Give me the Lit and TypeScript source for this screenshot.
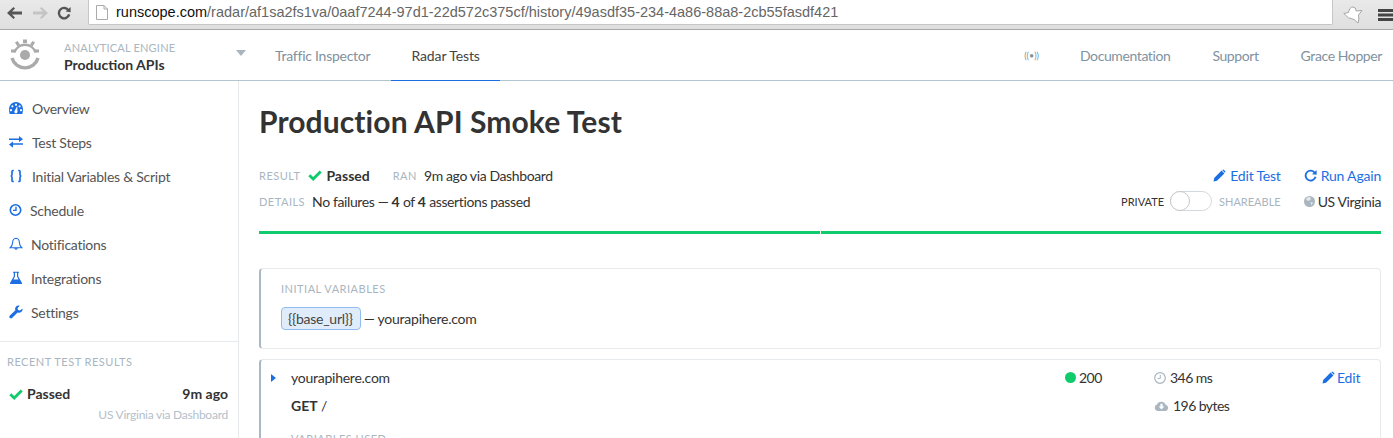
import { LitElement, html, css, svg } from "lit";
import { customElement } from "lit/decorators.js";

const BLUE = "#1c6fe3";
const pencil = html`<svg width="13" height="13" viewBox="0 0 13 13"><path fill="${BLUE}" d="M0.5 12.5 L1.2 9 L8.6 1.6 L11.4 4.4 L4 11.8 Z M9.4 0.9 Q10.2 0.1 11 0.9 L12.1 2 Q12.9 2.8 12.1 3.6 L11.9 3.8 L9.2 1.1 Z"/></svg>`;
const check = () => html`<svg width="14" height="14" viewBox="0 0 14 14"><path fill="none" stroke="#10cb6c" stroke-width="2.8" d="M1.3 7.2 L5.2 11 L12.7 3.4"/></svg>`;

const sideIcons: Record<string, unknown> = {
  overview: svg`<path fill="${BLUE}" fill-rule="evenodd" d="M.7 13 Q0 10.5 0 8 A7 7 0 0 1 14 8 Q14 10.5 13.3 13 Z M7 2.6 a1.1 1.1 0 1 0 .01 0 Z M3.4 4.2 a1.1 1.1 0 1 0 .01 0 Z M10.6 4.2 a1.1 1.1 0 1 0 .01 0 Z M2 8 a1.1 1.1 0 1 0 .01 0 Z M12 8 a1.1 1.1 0 1 0 .01 0 Z M8.2 5 L5.9 9.6 a1.6 1.6 0 1 0 2.6 1 Z"/>`,
  steps: svg`<path fill="${BLUE}" d="M0 3.4 H10 V1 L14 4.2 L10 7 V5 H0 Z M14 8.2 H4 V6.6 L0 9.6 L4 12.8 V9.8 H14 Z"/>`,
  vars: svg`<path fill="none" stroke="${BLUE}" stroke-width="1.7" d="M4.8 1.5 H4 Q3 1.5 3 2.5 V5.5 Q3 7 1.6 7 Q3 7 3 8.5 V11.5 Q3 12.5 4 12.5 H4.8 M9.2 1.5 H10 Q11 1.5 11 2.5 V5.5 Q11 7 12.4 7 Q11 7 11 8.5 V11.5 Q11 12.5 10 12.5 H9.2"/>`,
  schedule: svg`<circle cx="6.5" cy="7" r="5.2" fill="none" stroke="${BLUE}" stroke-width="1.6"/><path fill="none" stroke="${BLUE}" stroke-width="1.4" d="M7 3.8 V7.4 H4"/>`,
  bell: svg`<path fill="none" stroke="${BLUE}" stroke-width="1.1" d="M7 1.2 Q10.3 1.6 10.4 5.5 Q10.5 9 12.8 10.8 H1.2 Q3.5 9 3.6 5.5 Q3.7 1.6 7 1.2 Z M5.6 11 Q7 13.6 8.4 11"/>`,
  flask: svg`<path fill="${BLUE}" d="M4 .8 H10 V1.8 H9.2 V5.2 L13 12 Q13.4 13 12.3 13 H1.7 Q.6 13 1 12 L4.8 5.2 V1.8 H4 Z M6 1.8 V5.6 L4.4 8.4 H9.6 L8 5.6 V1.8 Z"/>`,
  wrench: svg`<path fill="${BLUE}" d="M13.5 3.4 L11 5.4 L9 4.9 L8.6 3 L10.8 .7 Q8.2 0 6.7 1.9 Q5.7 3.4 6.4 5.3 L.9 10.6 Q-.3 12 .9 13 Q2.2 14 3.3 12.8 L8.6 7.4 Q10.5 8.1 12.2 7 Q14 5.6 13.5 3.4 Z"/>`,
};

@customElement("app-root")
export class AppRoot extends LitElement {
  static styles = css`
    :host { display: block; height: 438px; overflow: hidden; background: #fff; font-family: "Lato", "Noto Sans", sans-serif; font-size: 14px; letter-spacing: -0.25px; color: #333; }
    svg { display: block; flex: none; }
    b { letter-spacing: 0; }
    .chrome { height: 30px; display: flex; align-items: flex-start; background: linear-gradient(#e9e9e9, #dfdfdf); border-bottom: 1px solid #a8a8a8; box-sizing: border-box; letter-spacing: 0; }
    .chrome .btns { width: 88px; height: 25px; display: flex; align-items: center; padding-left: 7px; gap: 9px; box-sizing: border-box; flex: none; }
    .url { width: 1245px; flex: none; height: 25px; background: #fff; border: 1px solid #c6c6c6; border-top: 0; border-radius: 0 0 2px 2px; display: flex; align-items: center; gap: 8px; padding-left: 7px; font: 14.5px "Liberation Sans", sans-serif; color: #666; box-sizing: border-box; }
    .url b { font-weight: 400; color: #111; }
    .ext { flex: 1; display: flex; align-items: center; padding: 4px 0 0 10px; height: 25px; box-sizing: border-box; }
    .ext svg + svg { margin-left: 15px; }

    .nav { height: 51px; display: flex; align-items: stretch; border-bottom: 1px solid #b4c5d2; box-sizing: border-box; }
    .brand { width: 252px; flex: none; display: flex; align-items: center; padding-left: 10px; box-sizing: border-box; }
    .brand-text { margin-left: 24px; flex: 1; padding-top: 3px; }
    .brand-text small { display: block; font-size: 11px; line-height: 16px; letter-spacing: 0.2px; color: #a9b6c0; }
    .brand-text strong { display: block; font-size: 14px; line-height: 17px; letter-spacing: 0; color: #333; }
    .caret { width: 0; height: 0; border: 5px solid transparent; border-top: 6px solid #a9b6c0; border-bottom: 0; margin-right: 6px; margin-bottom: 4px; }
    .tab { display: flex; align-items: center; padding: 0 0 0 23px; color: #7f929f; }
    .tab.active { color: #444; letter-spacing: -0.1px; border-bottom: 1px solid ${css([BLUE] as unknown as TemplateStringsArray)}; margin-bottom: -1px; padding: 0 20px; margin-left: 21px; }
    .spacer { flex: 1; }
    .right { display: flex; align-items: center; padding-right: 11px; color: #7f929f; letter-spacing: -0.4px; }
    .right .sig { font-size: 9px; margin-right: 41px; letter-spacing: 0; }
    .right span.l { margin-left: 42px; }
    .right span.sig + span.l { margin-left: 0; }

    .body { display: flex; height: 357px; overflow: hidden; }
    .side { width: 239px; flex: none; border-right: 1px solid #e6eaed; box-sizing: border-box; }
    .menu { padding: 10px 0 11px 9px; border-bottom: 1px solid #e6eaed; height: 261px; box-sizing: border-box; }
    .menu a { height: 34px; display: flex; align-items: center; color: #555; }
    .recent { padding: 13px 10px 0 7px; }
    .recent h4 { margin: 0 0 16px; font-size: 11px; font-weight: 400; letter-spacing: 0.5px; color: #a9b6c0; line-height: 14px; }
    .r1 { display: flex; align-items: center; font-weight: 700; letter-spacing: 0; color: #333; gap: 4px; padding-left: 2px; }
    .r1 .t { margin-left: auto; }
    .r2 { text-align: right; color: #b4c0c9; font-size: 12px; margin-top: 5px; }

    .main { flex: 1; padding: 0 12px 0 20px; min-width: 0; }
    h1 { margin: 21px 0 0; font-size: 30px; line-height: 38px; font-weight: 700; letter-spacing: 0.1px; color: #333; }
    .meta { display: flex; justify-content: space-between; margin-top: 26px; letter-spacing: -0.38px; }
    .metaR { display: flex; height: 18px; align-items: center; }
    .lbl { font-size: 11px; letter-spacing: 0.5px; color: #a9b6c0; }
    .mr2 { margin-top: 8px; }
    .act { display: flex; align-items: center; gap: 4px; letter-spacing: -0.2px; color: ${css([BLUE] as unknown as TemplateStringsArray)}; }
    .act + .act { margin-left: 23px; }
    .act.tight { gap: 2px; }
    .sm { font-size: 11px; letter-spacing: 0; }
    .sm.off { color: #a9b6c0; }
    .toggle { width: 42px; height: 20px; border: 1px solid #d3d9de; border-radius: 11px; box-sizing: border-box; margin: 0 7px 0 6px; position: relative; flex: none; }
    .toggle::before { content: ""; position: absolute; left: -1px; top: -1px; width: 20px; height: 20px; border: 1px solid #c4c9cd; border-radius: 50%; box-sizing: border-box; background: #fff; }
    .bar { display: flex; gap: 1px; margin-top: 21px; }
    .bar i { flex: 1; height: 3px; background: #10cb6c; }
    .card { border: 1px solid #e6eaed; border-left: 2px solid #a9b8c4; border-radius: 4px; box-sizing: border-box; }
    .c1 { margin-top: 34px; height: 81px; padding: 12px 0 0 20px; }
    .c1 .lbl { line-height: 15px; display: block; }
    .c1row { display: flex; align-items: center; margin-top: 11px; }
    .pill { height: 23px; padding: 0 7px 0 6px; display: flex; align-items: center; background: #e1ecfa; border: 1px solid #8fbcf1; border-radius: 4px; margin-right: 3px; box-sizing: border-box; color: #444; }
    .c2 { margin-top: 10px; height: 120px; padding: 8px 0 0 10px; }
    .row { display: grid; grid-template-columns: 20px 774px 89px 168px 1fr; height: 19px; align-items: center; }
    .row + .row { margin-top: 9px; }
    .tri { width: 0; height: 0; border: 4px solid transparent; border-left: 5px solid ${css([BLUE] as unknown as TemplateStringsArray)}; border-right: 0; }
    .f { display: flex; align-items: center; gap: 3px; letter-spacing: -0.55px; }
    .f.w { gap: 4px; }
    .dot { width: 11px; height: 11px; border-radius: 50%; background: #10cb6c; }
    .vu { margin: 17px 0 0 20px; display: block; }
    .gap7 { width: 7px; flex: none; } .gap8 { width: 8px; flex: none; } .gap4 { width: 4px; flex: none; } .gap3 { width: 3px; flex: none; } .gap23 { width: 23px; flex: none; }
    .end { justify-content: flex-end; }
  `;
  render() {
    const items: [string, string, number][] = [
      ["overview", "Overview", 23], ["steps", "Test Steps", 23], ["vars", "Initial Variables & Script", 23],
      ["schedule", "Schedule", 21], ["bell", "Notifications", 22], ["flask", "Integrations", 22], ["wrench", "Settings", 22],
    ];
    return html`
      <div class="chrome">
        <div class="btns">
          <svg width="16" height="14" viewBox="0 0 16 14"><path fill="#555" d="M0 7 L6.5 1 L8 2.6 L5 5.4 H15 V8.6 H5 L8 11.4 L6.5 13 Z"/></svg>
          <svg width="16" height="14" viewBox="0 0 16 14"><path fill="#c4c4c4" d="M16 7 L9.5 1 L8 2.6 L11 5.4 H1 V8.6 H11 L8 11.4 L9.5 13 Z"/></svg>
          <svg width="14" height="14" viewBox="0 0 14 14"><path fill="none" stroke="#555" stroke-width="2.4" d="M11.6 4.4 A5.2 5.2 0 1 0 12.2 8.4"/><path fill="#555" d="M8.6 5.6 L13.6 1 V6.2 Z"/></svg>
        </div>
        <div class="url">
          <svg width="12" height="15" viewBox="0 0 12 15"><path fill="#fff" stroke="#aaa" d="M.5 .5 H8 L11.5 4 V14.5 H.5 Z M8 .5 V4 H11.5"/></svg>
          <span><b>runscope.com</b>/radar/af1sa2fs1va/0aaf7244-97d1-22d572c375cf/history/49asdf35-234-4a86-88a8-2cb55fasdf421</span>
        </div>
        <div class="ext">
          <svg width="20" height="18" viewBox="0 0 20 18"><path fill="#fff" stroke="#a5a5a5" d="M.8 7.5 L5.5 6.5 Q6.5 1 10 1 Q13 1 13.2 5 L19 4.5 L15.5 9 Q16.5 13 15 17 L11 13.5 Q5 13 .8 7.5 Z"/></svg>
          <svg width="16" height="12" viewBox="0 0 16 12"><path fill="#444" d="M0 0 H16 V3 H0 Z M0 4.5 H16 V7.5 H0 Z M0 9 H16 V12 H0 Z"/></svg>
        </div>
      </div>
      <div class="nav">
        <div class="brand">
          <svg width="30" height="34" viewBox="0 0 30 34"><path fill="none" stroke="#aaa" stroke-width="2.4" d="M4.5 14.5 A11 11 0 0 1 25.5 14.5"/><path fill="#aaa" d="M13 1.5 H17 V5 H13 Z M5 4.5 L7.5 3 L10 6.5 L7.5 8.5 Z M25 4.5 L22.5 3 L20 6.5 L22.5 8.5 Z M1 11.5 H5 V14.5 H1 Z M25 11.5 H29 V14.5 H25 Z"/><path fill="none" stroke="#aaa" stroke-width="3.4" d="M2 20 A13.5 13.5 0 0 0 28 20"/><circle cx="15" cy="17" r="5" fill="#aaa"/></svg>
          <div class="brand-text"><small>ANALYTICAL ENGINE</small><strong>Production APIs</strong></div>
          <div class="caret"></div>
        </div>
        <div class="tab">Traffic Inspector</div>
        <div class="tab active">Radar Tests</div>
        <div class="spacer"></div>
        <div class="right">
          <span class="sig">((•))</span>
          <span class="l">Documentation</span><span class="l">Support</span><span class="l">Grace Hopper</span>
        </div>
      </div>
      <div class="body">
        <div class="side">
          <div class="menu">
            ${items.map(([k, t, w]) => html`<a><span style="width:${w}px"><svg width="14" height="14" viewBox="0 0 14 14">${sideIcons[k]}</svg></span>${t}</a>`)}
          </div>
          <div class="recent">
            <h4>RECENT TEST RESULTS</h4>
            <div class="r1">${check()}<span>Passed</span><span class="t">9m ago</span></div>
            <div class="r2">US Virginia via Dashboard</div>
          </div>
        </div>
        <div class="main">
          <h1>Production API Smoke Test</h1>
          <div class="meta">
            <div>
              <div class="metaR">
                <span class="lbl">RESULT</span><span class="gap8"></span>${check()}<span class="gap4"></span><b>Passed</b><span class="gap23"></span>
                <span class="lbl">RAN</span><span class="gap7"></span>9m ago via Dashboard
              </div>
              <div class="metaR mr2"><span class="lbl">DETAILS</span><span class="gap7"></span>No failures —&nbsp;<b>4</b>&nbsp;of&nbsp;<b>4</b>&nbsp;assertions passed</div>
            </div>
            <div>
              <div class="metaR end">
                <span class="act">${pencil}Edit Test</span>
                <span class="act"><svg width="13" height="13" viewBox="0 0 14 14"><path fill="none" stroke="${BLUE}" stroke-width="2" d="M11.6 4 A5.4 5.4 0 1 0 12.4 8.4"/><path fill="${BLUE}" d="M8.6 5.6 L13.6 1 V6.2 Z"/></svg>Run Again</span>
              </div>
              <div class="metaR mr2 end">
                <span class="sm">PRIVATE</span>
                <span class="toggle"></span>
                <span class="sm off">SHAREABLE</span>
                <span class="gap23"></span>
                <svg width="11" height="11" viewBox="0 0 11 11"><circle cx="5.5" cy="5.5" r="5.5" fill="#a9b6c0"/><path fill="#e3e8ec" d="M3 1.6 L6 1 L7 3 L5 5 L2 4 Z M6.5 6 L9 6.5 L7.5 9.5 Z"/></svg>
                <span class="gap3"></span>US Virginia
              </div>
            </div>
          </div>
          <div class="bar"><i></i><i></i></div>
          <div class="card c1">
            <span class="lbl">INITIAL VARIABLES</span>
            <div class="c1row"><span class="pill">{{base_url}}</span>— yourapihere.com</div>
          </div>
          <div class="card c2">
            <div class="row">
              <span class="tri"></span><span>yourapihere.com</span>
              <span class="f"><span class="dot"></span>200</span>
              <span class="f w"><svg width="12" height="12" viewBox="0 0 12 12"><circle cx="6" cy="6" r="5.3" fill="none" stroke="#a9b6c0" stroke-width="1.2"/><path fill="none" stroke="#a9b6c0" d="M6.3 2.8 V6.4 H3.5"/></svg>346 ms</span>
              <span class="act tight">${pencil}Edit</span>
            </div>
            <div class="row">
              <span></span><span><b>GET</b> /</span><span></span>
              <span class="f w"><svg width="15" height="12" viewBox="0 0 15 12"><path fill="#a9b6c0" d="M3.5 11 A3.3 3.3 0 0 1 3 4.6 A4.6 4.6 0 0 1 11.6 4.8 A3.2 3.2 0 0 1 11.8 11 Z"/><path fill="#fff" d="M6.4 3.8 H8.6 V6.6 H10.4 L7.5 9.6 L4.6 6.6 H6.4 Z"/></svg>196 bytes</span>
            </div>
            <span class="lbl vu">VARIABLES USED</span>
          </div>
        </div>
      </div>
    `;
  }
}
